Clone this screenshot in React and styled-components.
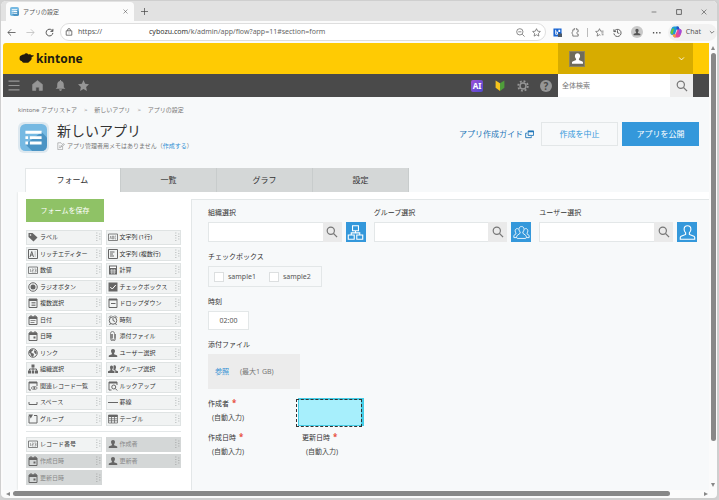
import React from 'react';
import styled, { createGlobalStyle, css } from 'styled-components';

const fieldTypes = [
  ['tag', 'ラベル'], ['abc', '文字列 (1行)'],
  ['rich', 'リッチエディター'], ['lines', '文字列 (複数行)'],
  ['num', '数値'], ['calc', '計算'],
  ['radio', 'ラジオボタン'], ['check', 'チェックボックス'],
  ['multi', '複数選択'], ['drop', 'ドロップダウン'],
  ['date', '日付'], ['clock', '時刻'],
  ['datetime', '日時'], ['clip', '添付ファイル'],
  ['globe', 'リンク'], ['user', 'ユーザー選択'],
  ['org', '組織選択'], ['group', 'グループ選択'],
  ['related', '関連レコード一覧'], ['lookup', 'ルックアップ'],
  ['space', 'スペース'], ['rule', '罫線'],
  ['folder', 'グループ'], ['table', 'テーブル'],
];

const systemTypes = [
  ['num', 'レコード番号', false], ['user', '作成者', true],
  ['datetime', '作成日時', true], ['user', '更新者', true],
  ['datetime', '更新日時', true],
];

const pickers = [
  ['org-field', '組織選択', 'orgOutline'],
  ['group-field', 'グループ選択', 'groupOutline'],
  ['user-field', 'ユーザー選択', 'userOutline'],
];

const person = 'M10 2c2.500 0 4 1.800 4 4.200 0 1.800-.8 3.300-1.800 4.300v1.800l5.300 2.200c.6.3 1 .9 1 1.500v2H1.500v-2c0-.6.4-1.200 1-1.500l5.300-2.200v-1.800C6.800 9.500 6 8 6 6.200 6 3.800 7.500 2 10 2z';

const line = { fill: 'none', stroke: 'currentColor', strokeWidth: 2 };

const shapes = {
  tag: <><path d="M1 2h8l10 9-8 8L1 10z" fill="currentColor" /><circle cx="5" cy="6" r="1.6" fill="#fff" /></>,
  abc: <g {...line} strokeWidth="1.6"><path d="M1 4h18v13H1z" /><path d="M4 14l1.500-6L7 14M9 8v6h2V8zM16 8h-2v6h2" strokeWidth="1" /></g>,
  rich: <g {...line}><path d="M1 1h18v18H1z" /><path d="M4 16l3.500-11L11 16M5 12h5" /><path d="M13 6h3M13 10h3M13 14h3" strokeWidth="1" /></g>,
  lines: <g {...line}><path d="M1 1h18v18H1zM4 6h9M4 10h6M4 14h8" /></g>,
  num: <g {...line} strokeWidth="1.6"><path d="M1 4h18v13H1z" /><path d="M5 8v6M8 8h2.500v3H8v3h3M13 8h3v6h-3M14 11h2" strokeWidth="1" /></g>,
  calc: <><path d="M2 1h16v18H2z" fill="currentColor" /><path d="M4 3h12v3H4z" fill="#fff" /><path d="M4 10.500h12M4 14h12M7 8v10M10 8v10M13 8v10" stroke="#f1f3f3" /></>,
  radio: <><circle cx="10" cy="10" r="8.500" {...line} /><circle cx="10" cy="10" r="5" fill="currentColor" /></>,
  check: <><path d="M1 1h18v18H1z" fill="currentColor" /><path d="M4.500 10l4 4 7-8" fill="none" stroke="#fff" strokeWidth="2" /></>,
  multi: <><path d="M2 2h16v17H2z" {...line} /><path d="M2 2h16v4H2z" fill="currentColor" /><path d="M7 9h8M7 12h8M7 15h8" {...line} strokeWidth="1.500" /></>,
  drop: <><path d="M2 2h16v17H2z" {...line} /><path d="M2 2h16v3H2z" fill="currentColor" /><path d="M6 11h9" {...line} /></>,
  date: <><path d="M2 4h16v15H2z" {...line} /><path d="M2 3h16v5H2zM5 0h2v4H5zM13 0h2v4h-2z" fill="currentColor" /><path d="M5 11h10M5 15h8" {...line} strokeWidth="1.500" /></>,
  clock: <><circle cx="10" cy="11" r="7.500" {...line} /><path d="M10 6v5l4 2M2 5l4-4M18 5l-4-4M5 17l-2 3M15 17l2 3" {...line} /></>,
  datetime: <><path d="M2 4h16v15H2z" {...line} /><path d="M2 3h16v5H2zM5 0h2v4H5zM13 0h2v4h-2zM11 11h4v4h-4z" fill="currentColor" /></>,
  clip: <path d="M7 6v9a3 3 0 006 0V5a4 4 0 00-8 0v10a5 5 0 0010 0V6M9 6v9" {...line} strokeWidth="1.500" />,
  globe: <><circle cx="10" cy="10" r="8.500" {...line} /><path d="M3 5l6-3 1 3-3 2v3l4 1 1 3-3 4-3-3-1-4-3-2zM13 4l4 3v6l-3-2-2-3z" fill="currentColor" /></>,
  user: <path d={person} fill="currentColor" />,
  org: <><path d="M7 1h6v6H7zM0 13h6v6H0zM14 13h6v6h-6zM7.500 13h5v6h-5z" fill="currentColor" /><path d="M10 7v6M3 13v-3h14v3" {...line} /></>,
  group: <><path d="M7 3c2 0 3 1.500 3 3.500S9 10 8.500 10.500v2l4.500 2V18H0v-3.500l5-2v-2C4.300 9.500 4 8 4 6.500S5 3 7 3z" fill="currentColor" /><path d="M11 3.500C13 1.500 16 3 16 6c0 2-.5 3.500-1 4v2.500l5 2V18h-5.500v-4.500L11 12z" fill="currentColor" /></>,
  related: <><path d="M18 10V2H2v16h4" {...line} /><path d="M2 2h16v3H2z" fill="currentColor" /><path d="M6 14c3-4 10-4 13 0-3 4-10 4-13 0z" {...line} strokeWidth="1.500" /><circle cx="12.500" cy="14" r="2" fill="currentColor" /></>,
  lookup: <><path d="M18 8V2H2v16h5" {...line} /><path d="M2 2h16v3H2z" fill="currentColor" /><circle cx="11.500" cy="12" r="4" {...line} /><path d="M14.500 15l4 4" {...line} /></>,
  space: <path d="M2 10v5h16v-5" {...line} />,
  rule: <path d="M0 11h20" {...line} />,
  folder: <><path d="M5 3H2v15h16V3h-6" {...line} /><path d="M1 1h9L5.500 9z" fill="currentColor" /></>,
  table: <><path d="M1 2h18v16H1zM1 9.500h18M1 13.500h18M7 6v12M13 6v12" {...line} strokeWidth="1.500" /><path d="M1 2h18v4H1z" fill="currentColor" /></>,
  search: <><circle cx="8" cy="8" r="6" {...line} /><path d="M12.500 12.500l6 6" {...line} /></>,
  orgOutline: <path d="M6.500 2h7v6h-7zM1.500 13h7v5h-7zM11.500 13h7v5h-7zM10 8v2.500M5 13v-2.500h10V13" {...line} strokeWidth="1.300" />,
  userOutline: <path d={person} {...line} strokeWidth="1.300" />,
  groupOutline: <g {...line} strokeWidth="1"><path d="M10 3c2 0 3 1.300 3 3.200 0 1.500-.7 2.500-1.400 3.200v1.500l3.400 2.500c1 .8 1 3.600 0 3.600H5c-1 0-1-2.800 0-3.600l3.400-2.500V9.400C7.700 8.700 7 7.700 7 6.200 7 4.300 8 3 10 3z" /><path d="M6.500 6C4.500 4.500 2.500 6 2.500 8c0 1.300.5 2 1 2.600v1L1 13.500V16h3M13.500 6c2-1.500 4 0 4 2 0 1.300-.5 2-1 2.600v1l2.500 1.900V16h-3" /></g>,
  back: <path d="M19 10H2M9 3l-7 7 7 7" {...line} strokeWidth="1.700" />,
  forward: <path d="M1 10h17M11 3l7 7-7 7" {...line} strokeWidth="1.700" />,
  reload: <path d="M17.500 11A7.500 7.500 0 1115 4.500L17 7M17.500 2v5.500H12" {...line} />,
  lock: <path d="M3 7h14v11H3zM6.500 7V5a3.500 3.500 0 017 0v2M10 11.500v2" {...line} />,
  zoomOut: <path d="M8.500 1.500a7 7 0 100 14 7 7 0 000-14zM14 14l5 5M5 8.500h7" {...line} strokeWidth="1.500" />,
  starLine: <path d="M10 1.500l2.600 5.500 6 .8-4.400 4.200 1.100 6-5.300-2.900L4.700 18l1.100-6L1.400 7.800l6-.8z" {...line} strokeWidth="1.500" />,
  bookmarks: <path d="M12 16l-2-1.100L4.700 18l1.100-6L1.400 7.800l6-.8L10 1.500 12.600 7H19M14 11h5M15 15h4" {...line} strokeWidth="1.500" />,
  bit: <><path d="M1 1h18v18H1z" fill="#1763d1" /><path d="M6 4v10h4V9H6" fill="none" stroke="#fff" strokeWidth="2" /><path d="M12 4h4v5h-4z" fill="#fff" /><path d="M11 12h9v8h-9z" fill="#4d5966" /></>,
  puzzle: <path d="M16 5V4H12.500a3 3 0 10-5 0H4v4a3.300 3.300 0 000 6v4h12v-4.500h-1.500a2.700 2.700 0 010-5H16z" {...line} strokeWidth="1.600" />,
  history: <path d="M2 3v5h5M2.500 8a8 8 0 11-.5 4M10 5v6l4 1" {...line} />,
  dots: <path d="M2 9h3v3H2zM9 9h3v3H9zM16 9h3v3h-3z" fill="currentColor" />,
  down: <path d="M3 7l7 7 7-7" {...line} strokeWidth="2.500" />,
  cross: <path d="M2 2l16 16M18 2L2 18" {...line} />,
  plus: <path d="M10 0v20M0 10h20" {...line} />,
  minus: <path d="M2 10h16" {...line} />,
  square: <path d="M2 2h16v16H2z" {...line} strokeWidth="2.500" />,
  menu: <path d="M0 2h20M0 10h20M0 18h20" {...line} />,
  home: <path d="M10 1l9 7v11h-6v-6H7v6H1V8z" fill="currentColor" stroke="currentColor" strokeLinejoin="round" />,
  bell: <path d="M9 0h2v2c4 1 5 3.500 5 7v4l3 3H1l3-3V9c0-3.500 1-6 5-7zM7.500 17h5c0 4-5 4-5 0z" fill="currentColor" />,
  star: <path d="M10 0l3 6.700 7 .9-5.200 5L16.200 20 10 16.300 3.800 20l1.400-7.400L0 7.600l7-.9z" fill="currentColor" />,
  leaf: <><path d="M2 1l8 5v14l-8-6z" fill="#f6c31c" /><path d="M18 1l-8 5v14l8-6z" fill="#4f9d3a" /></>,
  gear: <><circle cx="10" cy="10" r="5" {...line} strokeWidth="2.500" /><circle cx="10" cy="10" r="8" {...line} strokeWidth="3" strokeDasharray="3.140 3.143" /></>,
  popup: <><path d="M7 2h12v10H7z" {...line} /><path d="M7 2h12v3H7z" fill="currentColor" /><path d="M5 7H1.500v10H14v-3" {...line} /></>,
  memo: <path d="M14 11v8H2V2h8l4 4M5 10h4M5 14h5M10 12l1-3 6-5 2 2-6 5z" {...line} strokeWidth="1.200" />,
  app: (
    <>
      <rect width="20" height="20" rx="4" fill="#76b9e2" />
      <path d="M4 15l5 5h7a4 4 0 004-4V10l-4-4z" fill="#4b94c4" />
      <path d="M4 5h12v2.200H4zM4 9h2v2.200H4zM7.300 9H16v2.200H7.300zM4 13h2v2.200H4zM7.300 13H16v2.200H7.300z" fill="#fff" />
    </>
  ),
  copilot: (
    <>
      <path d="M7 1h6c2 0 2 2 3 5h-5L8 15H4c-4 0-4-4-2-9C3 3 4 1 7 1z" fill="#1c9bd8" />
      <path d="M2 8c1-3 2-4 5-4L5 12c-1 3-4 1-4-1z" fill="#6dc33c" />
      <path d="M13 5h3c4 0 4 4 2 9-1 3-2 5-5 5H8c-2 0-2-2-3-5h4z" fill="#e5499a" />
      <path d="M4 14h6l-1 5C6 19 5 17 4 14z" fill="#f6a23c" />
      <path d="M11 1h2c2 0 2 2 3 5h-5z" fill="#2450c8" />
      <path d="M15 5h1c4 0 4 4 2 9h-4z" fill="#a14ddb" />
    </>
  ),
  grip: <path d="M2 1h3v2H2zM2 6h3v2H2zM2 11h3v2H2zM2 16h3v2H2zM8 3h3v2H8zM8 8h3v2H8zM8 13h3v2H8z" fill="currentColor" />,
  cloud: <path d="M5 5c2-2 4-2 6-2 2-3 7-3 9 0 3-1 6 0 7 2l4 0c1 0 1 2 0 2l-4 2c1 4-1 7-4 9-2 3-5 4-8 3-4 1-8 0-9-3-4-1-6-4-5-7 0-3 1-5 4-6z" fill="#201a10" />,
};

const Icon = ({ name, size = 10, width, box = '0 0 20 20' }) => (
  <Icon.Svg width={width || size} height={size} viewBox={box} aria-hidden="true">
    {shapes[name]}
  </Icon.Svg>
);

Icon.Svg = styled.svg`
  display: block;
  flex: none;
`;

const Palette = ({ items, height }) => (
  <Palette.Grid $rows={Math.ceil(items.length / 2)} $height={height}>
    {items.map(([icon, label, used]) => (
      <Palette.Item key={label} disabled={used} type="button">
        <Icon name={icon} />
        <Palette.Name>{label}</Palette.Name>
        <Icon name="grip" width={6} size={10} box="0 0 12 20" />
      </Palette.Item>
    ))}
  </Palette.Grid>
);

const Picker = ({ id, label, icon }) => (
  <Field>
    <Label htmlFor={id}>{label}</Label>
    <Picker.Row>
      <Picker.Input id={id} type="text" />
      <Picker.Search type="button" aria-label="検索"><Icon name="search" size={12} /></Picker.Search>
      <Picker.Open type="button" aria-label={label}><Icon name={icon} size={17} /></Picker.Open>
    </Picker.Row>
  </Field>
);

const AutoField = ({ label }) => (
  <AutoField.Cell>
    <Label as="span">{label}<Required>*</Required></Label>
    <AutoField.Value>(自動入力)</AutoField.Value>
  </AutoField.Cell>
);

const App = () => (
  <>
    <GlobalStyle />
    <Browser>
      <TitleBar>
        <BrowserTab>
          <Icon name="app" size={9} />
          <BrowserTabTitle>アプリの設定</BrowserTabTitle>
          <PlainButton type="button" aria-label="タブを閉じる"><Icon name="cross" size={5} /></PlainButton>
        </BrowserTab>
        <PlainButton type="button" aria-label="新しいタブ"><Icon name="plus" size={7} /></PlainButton>
        <WindowButtons>
          <PlainButton type="button" aria-label="最小化"><Icon name="minus" size={6} /></PlainButton>
          <PlainButton type="button" aria-label="最大化"><Icon name="square" size={6} /></PlainButton>
          <PlainButton type="button" aria-label="閉じる"><Icon name="cross" size={6} /></PlainButton>
        </WindowButtons>
      </TitleBar>
      <Toolbar>
        <History>
          <PlainButton type="button" aria-label="戻る"><Icon name="back" size={9} /></PlainButton>
          <PlainButton type="button" aria-label="進む" $faint><Icon name="forward" size={9} /></PlainButton>
          <PlainButton type="button" aria-label="更新"><Icon name="reload" size={9} /></PlainButton>
        </History>
        <Address>
          <Icon name="lock" size={8} />
          <Scheme>https://</Scheme>
          <Url><b>cybozu.com</b>/k/admin/app/flow?app=11#section=form</Url>
          <Icon name="zoomOut" size={9} />
          <Icon name="starLine" size={9} />
        </Address>
        <Extensions>
          <Icon name="bit" size={9} />
          <Icon name="puzzle" size={9} />
        </Extensions>
        <Divider />
        <Extensions>
          <Icon name="bookmarks" size={9} />
          <Icon name="history" size={9} />
          <Avatar><Icon name="user" size={8} /></Avatar>
          <Icon name="dots" size={9} />
        </Extensions>
        <Chat type="button">
          <Icon name="copilot" size={12} />
          Chat
          <Icon name="down" size={6} />
        </Chat>
      </Toolbar>
      <Viewport>
        <Page>
          <Brand>
            <Logo href="#">
              <Icon name="cloud" width={15} size={11} box="0 0 32 24" />
              kintone
            </Logo>
            <Account type="button">
              <AccountPhoto><Icon name="user" size={13} /></AccountPhoto>
              <Icon name="down" size={7} />
            </Account>
          </Brand>
          <NavBar>
            <NavGroup $gap="12px">
              <NavButton type="button" aria-label="メニュー"><Icon name="menu" width={12} size={11} /></NavButton>
              <NavButton type="button" aria-label="ホーム"><Icon name="home" size={11} /></NavButton>
              <NavButton type="button" aria-label="通知"><Icon name="bell" size={11} /></NavButton>
              <NavButton type="button" aria-label="お気に入り"><Icon name="star" size={11} /></NavButton>
            </NavGroup>
            <NavGroup $gap="11px">
              <AiBadge type="button">AI</AiBadge>
              <NavButton type="button" aria-label="ガイド"><Icon name="leaf" size={11} width={12} /></NavButton>
              <NavButton type="button" aria-label="設定"><Icon name="gear" size={12} /></NavButton>
              <Help type="button">?</Help>
            </NavGroup>
            <SiteSearch>
              <SiteSearchInput type="search" placeholder="全体検索" aria-label="全体検索" />
              <SiteSearchButton type="button" aria-label="検索"><Icon name="search" size={12} /></SiteSearchButton>
            </SiteSearch>
          </NavBar>
          <Breadcrumb>
            <a href="#store">kintone アプリストア</a>
            <span>&gt;</span>
            <a href="#app">新しいアプリ</a>
            <span>&gt;</span>
            <span>アプリの設定</span>
          </Breadcrumb>
          <Heading>
            <AppIcon><Icon name="app" size={27} /></AppIcon>
            <HeadingText>
              <Title>新しいアプリ</Title>
              <Memo>
                <Icon name="memo" size={8} />
                <span>アプリ管理者用メモはありません（<a href="#memo">作成する</a>）</span>
              </Memo>
            </HeadingText>
            <Guide href="#guide">アプリ作成ガイド <Icon name="popup" size={9} /></Guide>
            <Action type="button">作成を中止</Action>
            <Action type="button" $primary>アプリを公開</Action>
          </Heading>
          <Tabs role="tablist">
            <Tab type="button" role="tab" aria-selected="true" $active>フォーム</Tab>
            <Tab type="button" role="tab" aria-selected="false">一覧</Tab>
            <Tab type="button" role="tab" aria-selected="false">グラフ</Tab>
            <Tab type="button" role="tab" aria-selected="false">設定</Tab>
          </Tabs>
          <Editor>
            <Sidebar>
              <Save type="button">フォームを保存</Save>
              <Palette items={fieldTypes} height="196px" />
              <Separator />
              <Palette items={systemTypes} height="48px" />
            </Sidebar>
            <Canvas>
              <Pickers>
                {pickers.map(([id, label, icon]) => (
                  <Picker key={id} id={id} label={label} icon={icon} />
                ))}
              </Pickers>
              <Field>
                <Label as="span" id="checks">チェックボックス</Label>
                <Checks role="group" aria-labelledby="checks">
                  <Check><input type="checkbox" />sample1</Check>
                  <Check><input type="checkbox" />sample2</Check>
                </Checks>
              </Field>
              <Field>
                <Label htmlFor="time">時刻</Label>
                <Time id="time" type="text" defaultValue="02:00" />
              </Field>
              <Field>
                <Label as="span">添付ファイル</Label>
                <Attachment><a href="#file">参照</a><span>(最大1 GB)</span></Attachment>
              </Field>
              <AutoRow>
                <AutoField label="作成者" />
                <DropZone />
              </AutoRow>
              <AutoRow>
                <AutoField label="作成日時" />
                <AutoField label="更新日時" />
              </AutoRow>
            </Canvas>
          </Editor>
        </Page>
        <Scrollbar $vertical>
          <Arrow $turn="0deg" />
          <Thumb $grow={393} />
          <Rest $grow={36} />
          <Arrow $turn="180deg" />
        </Scrollbar>
      </Viewport>
      <Scrollbar>
        <Arrow $turn="-90deg" />
        <Thumb $grow={657} />
        <Rest $grow={28} />
        <Arrow $turn="90deg" />
      </Scrollbar>
    </Browser>
  </>
);

export default App;

const GlobalStyle = createGlobalStyle`
  *, *::before, *::after {
    box-sizing: border-box;
  }

  body {
    margin: 0;
    background: #d2d2d2;
    color: #555;
    font: 7px/10px 'Noto Sans', 'Noto Sans CJK JP', sans-serif;
  }

  button, input {
    margin: 0;
    padding: 0;
    border: 0;
    border-radius: 0;
    color: inherit;
    font: inherit;
  }

  button {
    background: none;
  }

  a {
    color: #2f8fd3;
    text-decoration: none;
  }
`;

const Browser = styled.div`
  display: flex;
  flex-direction: column;
  height: 100vh;
  padding-bottom: 1px;
  overflow: hidden;
  background: #fbfbfb;
  border: 1px solid #cfcfcf;
  border-width: 1px 2px 2px 1px;
  border-radius: 6px;
`;

const PlainButton = styled.button`
  color: ${p => (p.$faint ? '#bbb' : '#444')};
`;

const TitleBar = styled.div`
  display: flex;
  align-items: center;
  gap: 7px;
  height: 20px;
  padding: 1px 10px 0 5px;
  background: #e2e2e2;
`;

const BrowserTab = styled.div`
  display: flex;
  align-items: center;
  gap: 4px;
  width: 128px;
  height: 19px;
  padding: 0 6px 0 4px;
  background: #fbfbfb;
  border-radius: 4px 4px 0 0;
`;

const BrowserTabTitle = styled.span`
  flex: 1;
  font-size: 6px;
`;

const WindowButtons = styled.div`
  display: flex;
  gap: 19px;
  margin-left: auto;
`;

const Toolbar = styled.div`
  display: flex;
  align-items: center;
  height: 22px;
  padding-left: 6px;
  color: #555;
`;

const History = styled.div`
  display: flex;
  gap: 10px;
  width: 53px;
`;

const Address = styled.div`
  display: flex;
  flex: 1;
  align-items: center;
  gap: 7px;
  height: 18px;
  padding: 0 4px;
  background: #fff;
  border: 1px solid #dedede;
  border-radius: 9px;
  font-size: 7px;
`;

const Scheme = styled.span`
  width: 64px;
  margin-left: -2px;
`;

const Url = styled.span`
  flex: 1;
  color: #666;

  b {
    color: #333;
    font-weight: 400;
  }
`;

const Extensions = styled.div`
  display: flex;
  align-items: center;
  gap: 9px;
  margin: 0 7px;
`;

const Divider = styled.i`
  width: 1px;
  height: 9px;
  background: #bbb;
`;

const Avatar = styled.span`
  display: grid;
  place-items: center;
  width: 12px;
  height: 12px;
  background: #c9c9c9;
  border-radius: 50%;
`;

const Chat = styled.button`
  display: flex;
  align-items: center;
  gap: 4px;
  height: 17px;
  padding: 0 2px;
  background: #f1f1f1;
  border-radius: 9px;

  svg:last-child {
    margin-left: 4px;
  }
`;

const Viewport = styled.div`
  display: flex;
  flex: 1;
  min-height: 0;
  padding-left: 2px;
`;

const Page = styled.main`
  display: flex;
  flex: 1;
  flex-direction: column;
  min-width: 0;
  overflow: hidden;
  background: #f7f9fa;
  border-top-left-radius: 3px;
`;

const Brand = styled.header`
  display: flex;
  flex: none;
  justify-content: space-between;
  height: 31px;
  padding: 0 16px;
  background: #ffcb03;
`;

const Logo = styled.a`
  display: flex;
  align-items: center;
  gap: 2px;
  color: #201a10;
  font-family: 'Open Sans', sans-serif;
  font-size: 12px;
  font-weight: 700;
`;

const Account = styled.button`
  display: flex;
  align-items: center;
  justify-content: space-between;
  width: 135px;
  padding: 0 8px 0 11px;
  background: #d7ac00;
  color: #fff;
`;

const AccountPhoto = styled.span`
  display: grid;
  place-items: center;
  width: 16px;
  height: 16px;
  background: #6f6b5c;
  border: 1px solid #8d8460;
`;

const NavBar = styled.nav`
  display: flex;
  flex: none;
  align-items: center;
  height: 23px;
  padding: 0 16px 0 5px;
  background: #4a4a4a;
  color: #999;
`;

const NavGroup = styled.div`
  display: flex;
  align-items: center;
  gap: ${p => p.$gap};

  & + & {
    margin: 0 6px 0 auto;
  }
`;

const NavButton = styled.button`
  color: #969696;
`;

const AiBadge = styled.button`
  width: 12px;
  height: 12px;
  background: linear-gradient(135deg, #a04fd8, #4f4ad0);
  border-radius: 2px;
  color: #fff;
  font-size: 8px;
  font-weight: 700;
`;

const Help = styled.button`
  width: 12px;
  height: 12px;
  background: #969696;
  border-radius: 50%;
  color: #4a4a4a;
  font-size: 10px;
  font-weight: 700;
`;

const SiteSearch = styled.div`
  display: flex;
  width: 135px;
  height: 23px;
`;

const SiteSearchInput = styled.input`
  flex: 1;
  min-width: 0;
  padding: 0 4px;
  background: #fff;

  &::placeholder {
    color: #777;
  }
`;

const SiteSearchButton = styled.button`
  display: grid;
  place-items: center;
  width: 23px;
  background: #eee;
  color: #777;
`;

const Breadcrumb = styled.div`
  display: flex;
  gap: 7px;
  padding: 8px 15px 7px;
  color: #777;
  font-size: 6px;

  a {
    color: inherit;
  }
`;

const Heading = styled.div`
  display: flex;
  align-items: flex-start;
  padding: 0 10px 0 15px;
`;

const AppIcon = styled.div`
  padding: 2px;
  background: #dde8ef;
  border-radius: 6px;
`;

const HeadingText = styled.div`
  flex: 1;
  padding-left: 8px;
`;

const Title = styled.h1`
  margin: 0;
  color: #333;
  font-size: 14px;
  font-weight: 400;
  line-height: 18px;
`;

const Memo = styled.div`
  display: flex;
  align-items: center;
  gap: 2px;
  height: 12px;
  color: #777;
  font-size: 6px;
`;

const Guide = styled.a`
  display: flex;
  align-items: center;
  gap: 2px;
  height: 24px;
  margin-right: 7px;
  color: #1d75b8;
  font-size: 8px;
`;

const Action = styled.button`
  width: 77px;
  height: 24px;
  border: 1px solid #e3e7e8;
  color: #3498db;
  font-size: 8px;

  ${p => p.$primary && css`
    margin-left: 4px;
    background: #3498db;
    border-color: #3498db;
    color: #fff;
  `}
`;

const Tabs = styled.div`
  display: flex;
  margin: 15px 0 0 22px;
`;

const Tab = styled.button`
  width: 14%;
  min-width: 96px;
  height: 24px;
  background: ${p => (p.$active ? '#fff' : '#d4d7d7')};
  border-right: 1px solid #c8cccc;
  box-shadow: ${p => (p.$active ? 'inset 1px 1px #e3e7e8' : 'none')};
  color: #333;
  font-size: 8px;
`;

const Editor = styled.div`
  display: flex;
  flex: 1;
  margin-left: 15px;
  background: #fff;
  box-shadow: 0 0 2px #d4d7d7;
  clip-path: inset(0 0 0 -2px);
`;

const Sidebar = styled.aside`
  flex: none;
  width: 173px;
  padding: 7px 10px 0 8px;
`;

const Save = styled.button`
  width: 78px;
  height: 23px;
  margin-bottom: 8px;
  background: #8fc266;
  color: #fff;
`;

const Separator = styled.hr`
  height: 1px;
  margin: 5px 0;
  background: #e3e7e8;
  border: 0;
`;

Palette.Grid = styled.div`
  display: grid;
  grid-template-columns: 1fr 1fr;
  grid-template-rows: repeat(${p => p.$rows}, 1fr);
  gap: 2px 4px;
  height: ${p => p.$height};
`;

Palette.Item = styled.button`
  display: flex;
  align-items: center;
  gap: 2px;
  min-width: 0;
  min-height: 0;
  padding: 0 0 0 1px;
  background: #f1f3f3;
  border: 1px solid #dfe3e3;
  color: #666;
  font-size: 6px;
  line-height: 10px;
  text-align: left;
  white-space: nowrap;

  &:disabled {
    background: #d4d7d7;
    border-color: #d4d7d7;
  }

  svg:last-child {
    color: #c6c9c9;
  }

  &:disabled svg:last-child {
    color: #b3b6b6;
  }
`;

Palette.Name = styled.span`
  flex: 1;
  color: #333;

  :disabled > & {
    color: #888;
  }
`;

const Canvas = styled.section`
  display: flex;
  flex: 1;
  flex-direction: column;
  align-items: flex-start;
  gap: 10px;
  min-width: 0;
  margin-top: 7px;
  padding: 8px 12px 0 16px;
  background: #f7f9fa;
  border: 1px solid #e3e7e8;
  border-width: 1px 0 0 1px;
`;

const Pickers = styled.div`
  display: grid;
  grid-template-columns: repeat(3, 1fr);
  gap: 8px;
  width: 100%;
`;

const Field = styled.div`
  display: flex;
  flex-direction: column;
  align-items: flex-start;
  gap: 4px;
`;

const Label = styled.label`
  display: block;
  color: #333;
  font-size: 7px;
`;

const Required = styled.b`
  margin-left: 3px;
  color: #e74c3c;
  font-size: 8px;
  line-height: 8px;
`;

Picker.Row = styled.div`
  display: flex;
  width: 100%;
  height: 20px;
`;

Picker.Input = styled.input`
  flex: 1;
  min-width: 0;
  background: #fff;
  border: 1px solid #e3e7e8;
  border-right: 0;
`;

Picker.Search = styled.button`
  display: grid;
  place-items: center;
  width: 19px;
  margin-right: 4px;
  background: #eaeaea;
  color: #777;
`;

Picker.Open = styled.button`
  display: grid;
  place-items: center;
  width: 20px;
  background: #3498db;
  color: #fff;
`;

const Checks = styled.div`
  display: flex;
  align-items: center;
  gap: 13px;
  height: 21px;
  padding: 0 10px 0 5px;
  border: 1px solid #e3e7e8;
`;

const Check = styled.label`
  display: flex;
  align-items: center;
  gap: 4px;

  input {
    width: 10px;
    height: 10px;
    background: #fff;
    border: 1px solid #dcdfe0;
    appearance: none;
  }
`;

const Time = styled.input`
  width: 41px;
  height: 19px;
  background: #fff;
  border: 1px solid #e3e7e8;
  text-align: center;
`;

const Attachment = styled.div`
  display: flex;
  align-items: center;
  gap: 11px;
  width: 92px;
  height: 35px;
  padding-left: 7px;
  background: #ececec;
  color: #777;
`;

const AutoRow = styled.div`
  display: flex;
`;

AutoField.Cell = styled.div`
  display: flex;
  flex-direction: column;
  gap: 4px;
  width: 94px;
`;

AutoField.Value = styled.span`
  padding-left: 4px;
  color: #444;
`;

/* the field being dragged, with the dashed outline of where it will land */
const DropZone = styled.div`
  position: relative;
  width: 66px;
  height: 24px;
  margin-left: -4px;

  &::before, &::after {
    position: absolute;
    content: '';
    width: 66px;
    height: 28px;
  }

  &::before {
    top: -1px;
    left: 0;
    background: #a7effc;
    border: 1px solid #45cde6;
    border-width: 2px 3px 1px 1px;
  }

  &::after {
    top: 0;
    left: -2px;
    border: 1px dashed #333;
  }
`;

const Scrollbar = styled.div`
  display: flex;
  flex: none;
  flex-direction: ${p => (p.$vertical ? 'column' : 'row')};
  align-items: center;
  gap: 3px;
  width: ${p => (p.$vertical ? '8px' : 'auto')};
  height: ${p => (p.$vertical ? 'auto' : '7px')};
  padding: ${p => (p.$vertical ? '3px 0' : '0 9px 0 5px')};
`;

const Arrow = styled.i`
  width: 4px;
  height: 4px;
  background: #888;
  clip-path: polygon(50% 0, 100% 100%, 0 100%);
  transform: rotate(${p => p.$turn});
`;

const Thumb = styled.i`
  flex: ${p => p.$grow};
  min-width: 5px;
  min-height: 5px;
  background: #888;
  border-radius: 3px;
`;

const Rest = styled.i`
  flex: ${p => p.$grow};
`;
